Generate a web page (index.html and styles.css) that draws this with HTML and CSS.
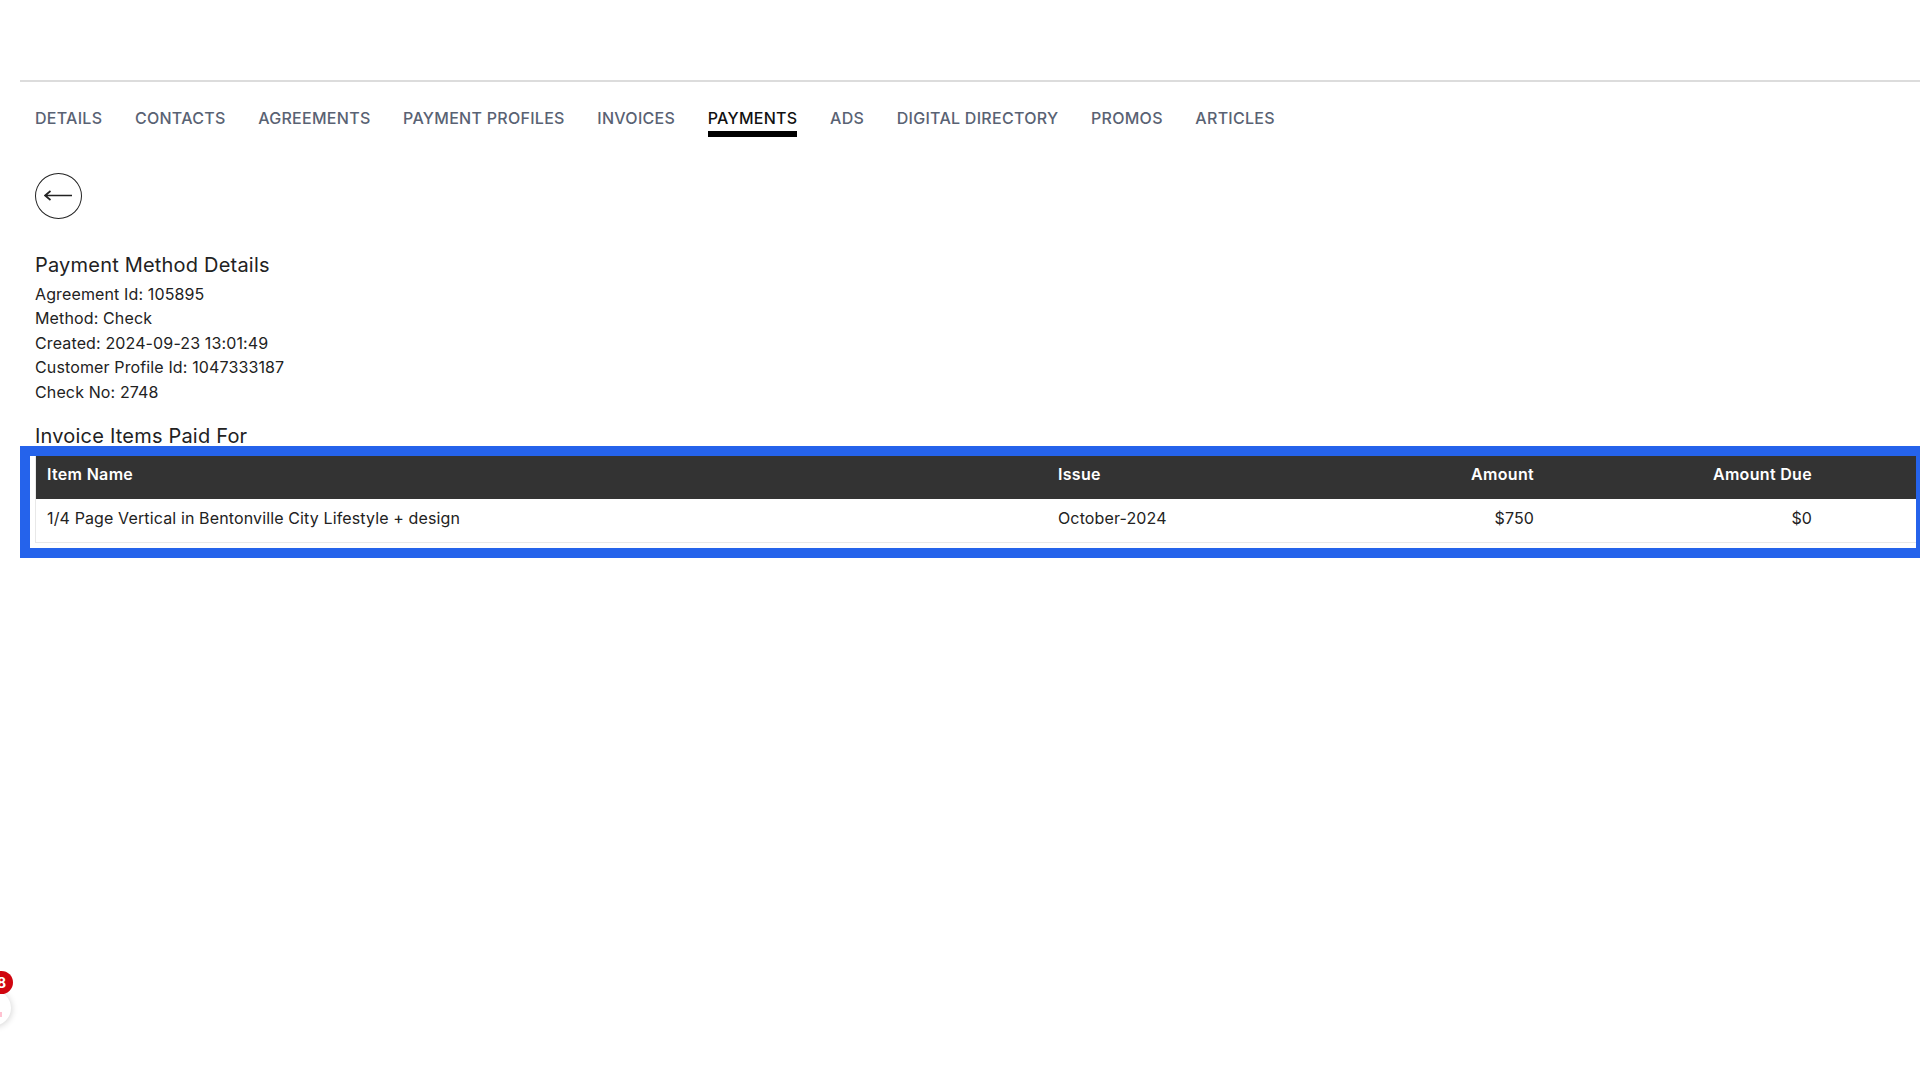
FILE: index.html
```
<!DOCTYPE HTML>

<html>

<head>
    <meta http-equiv="Content-Type" content="text/html;charset=UTF-8">
    <title>Payment Method Details</title>
    <link rel="stylesheet" href="styles.css">
</head>

<body>
    <div class="main">
        <div class="tabs">
            <a class="tab">DETAILS</a>
            <a class="tab">CONTACTS</a>
            <a class="tab">AGREEMENTS</a>
            <a class="tab">PAYMENT PROFILES</a>
            <a class="tab">INVOICES</a>
            <a class="tab active">PAYMENTS</a>
            <a class="tab">ADS</a>
            <a class="tab">DIGITAL DIRECTORY</a>
            <a class="tab">PROMOS</a>
            <a class="tab">ARTICLES</a>
        </div>
        <div class="content">
            <button class="back">
                <svg width="30" height="14" viewBox="0 0 30 14">
                    <path d="M1 6.5H28M6.5 2L1 6.5L6.5 11" fill="none" stroke="#222" stroke-width="1.7"></path>
                </svg>
            </button>
            <h2 class="title">Payment Method Details</h2>
            <div class="info">
                <div>Agreement Id: 105895</div>
                <div>Method: Check</div>
                <div>Created: 2024-09-23 13:01:49</div>
                <div>Customer Profile Id: 1047333187</div>
                <div>Check No: 2748</div>
            </div>
            <h2 class="title subtitle">Invoice Items Paid For</h2>
        </div>
        <div class="highlight">
            <table class="items">
                <thead>
                    <tr>
                        <th class="c-name">Item Name</th>
                        <th class="c-issue">Issue</th>
                        <th class="c-amount">Amount</th>
                        <th class="c-due">Amount Due</th>
                        <th></th>
                    </tr>
                </thead>
                <tbody>
                    <tr>
                        <td>1/4 Page Vertical in Bentonville City Lifestyle + design</td>
                        <td>October-2024</td>
                        <td class="c-amount">$750</td>
                        <td class="c-due">$0</td>
                        <td></td>
                    </tr>
                </tbody>
            </table>
        </div>
    </div>
    <!-- chat widget, mostly off screen -->
    <div class="chat"><span class="chatdot"></span></div>
    <div class="badge">8</div>
</body>

</html>
```
FILE: styles.css
```
* {
    margin: 0;
    padding: 0;
    box-sizing: border-box;
}

html,
body {
    height: 100%;
    overflow: hidden;
}

body {
    position: relative;
    background: #fff;
    color: #222;
    font-family: Inter, "Liberation Sans", sans-serif;
    font-size: 16px;
    letter-spacing: 0.13px;
}

.main {
    margin-top: 80px;
    margin-left: 20px;
    border-top: 2px solid #dcdcdc;
}

.tabs {
    display: flex;
    gap: 32.6px;
    height: 54px;
    padding: 24px 0 0 15px;
}

.tab {
    height: 31px;
    line-height: 24px;
    color: #596273;
    font-size: 16px;
    font-weight: 500;
    letter-spacing: 0.28px;
}

.tab.active {
    color: #111;
    border-bottom: 6px solid #000;
}

.content {
    padding: 37px 0 0 15px;
}

.back {
    display: flex;
    align-items: center;
    justify-content: center;
    width: 47px;
    height: 46px;
    border: 1.7px solid #222;
    border-radius: 50%;
    background: #fff;
}

.title {
    margin-top: 32px;
    font-size: 20px;
    font-weight: 400;
    line-height: 28px;
    letter-spacing: 0.2px;
}

.info {
    line-height: 24.4px;
    margin-top: 3px;
}

.subtitle {
    margin-top: 18px;
    height: 23.5px;
}

.highlight {
    width: 1900px;
    border: 10px solid #2563eb;
    border-right-width: 4px;
    padding: 0 0 5px 5px;
}

.items {
    width: 100%;
    border-collapse: collapse;
    table-layout: fixed;
    border-bottom: 1px solid #e8e8e8;
    border-left: 1px solid #e8e8e8;
}

.items th {
    height: 43px;
    padding: 0 12px 6px 11px;
    background: #333;
    color: #fff;
    font-weight: 600;
    letter-spacing: 0.32px;
    text-align: left;
}

.items td {
    height: 44px;
    padding: 0 12px 5px 11px;
    color: #222;
}

.c-name {
    width: 1011.5px;
}

.c-issue {
    width: 250px;
}

.c-amount {
    width: 249px;
}

.items th.c-amount,
.items th.c-due,
.items td.c-amount,
.items td.c-due {
    text-align: right;
}

.c-due {
    width: 278px;
}

.chat {
    position: absolute;
    left: -26px;
    top: 990px;
    width: 37px;
    height: 36px;
    border-radius: 50%;
    background: #fff;
    box-shadow: 1px 1px 6px rgba(0, 0, 0, 0.16);
}

.chatdot {
    position: absolute;
    left: 26px;
    top: 22px;
    width: 2px;
    height: 5px;
    background: #ffc2d1;
}

.badge {
    position: absolute;
    left: -10px;
    top: 971px;
    width: 23px;
    height: 23px;
    border-radius: 50%;
    background: #d0050f;
    color: #fff;
    font-size: 14px;
    font-weight: 700;
    line-height: 23px;
    text-align: center;
}
```
